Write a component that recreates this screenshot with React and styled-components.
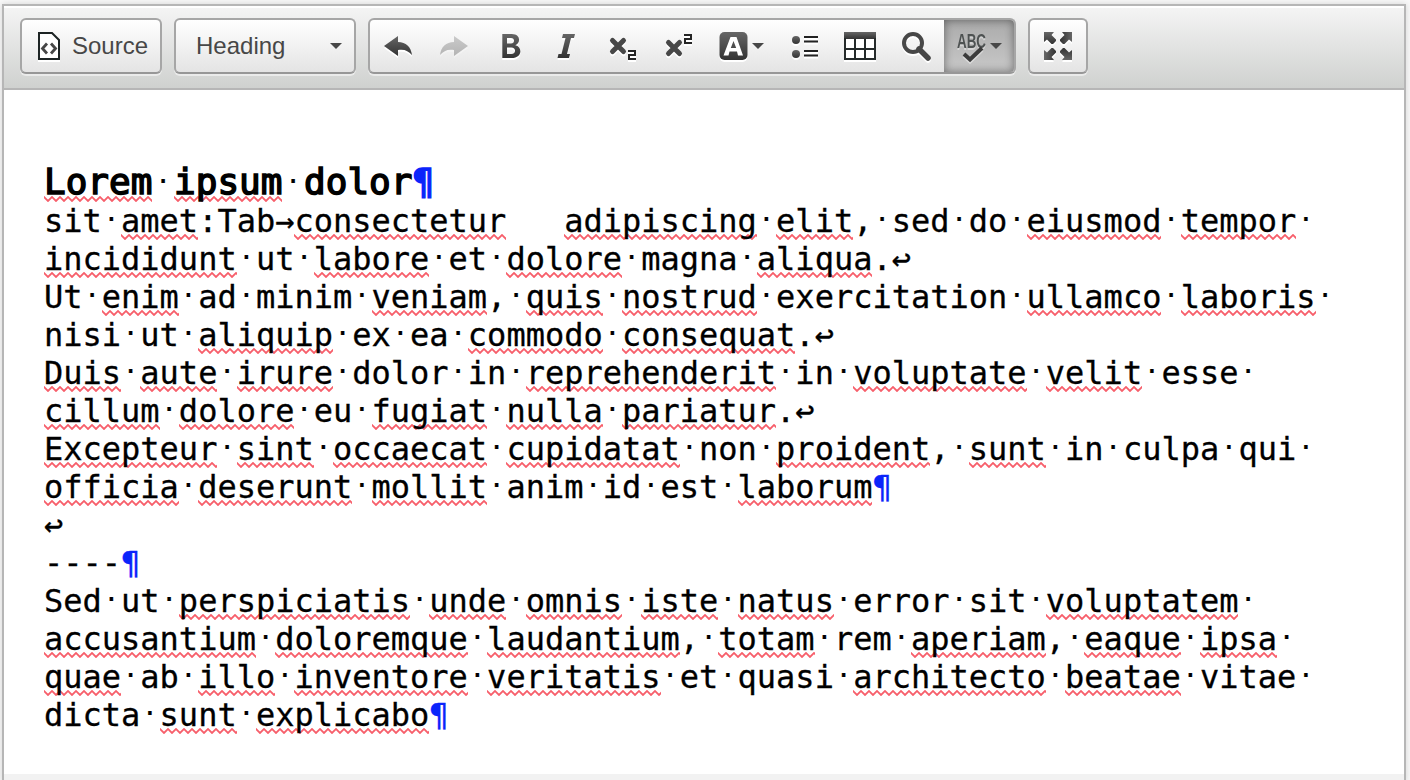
import React from 'react';
import styled, { createGlobalStyle, css } from 'styled-components';

const squiggle = `url("data:image/svg+xml,${encodeURIComponent(
  '<svg xmlns="http://www.w3.org/2000/svg" width="8" height="6" viewBox="0 0 8 6"><path d="M-2 3L0 1L4 5L8 1L10 3" fill="none" stroke="#f75f6b" stroke-width="1.8"/></svg>'
)}")`;

const Global = createGlobalStyle`
  * { box-sizing: border-box; }
  html, body { margin: 0; height: 100%; background: #f8f8f8; overflow: hidden; }
`;
const Editor = styled.div`
  width: 1404px;
  height: 778px;
  margin: 4px 0 0 2px;
  border: 2px solid #b6b6b6;
  border-bottom: 0;
  background: #fff;
  box-shadow: 0 0 6px rgba(0, 0, 0, 0.15);
  display: flex;
  flex-direction: column;
`;
const Toolbar = styled.div`
  height: 84px;
  flex: none;
  display: flex;
  align-items: flex-start;
  gap: 12px;
  padding: 12px 16px;
  border-bottom: 2px solid #b6b6b6;
  box-shadow: inset 0 2px 0 #fff;
  background: linear-gradient(#f5f5f5, #cfd1cf);
  font: 24px/1 'Liberation Sans', Arial, sans-serif;
  color: #474747;
`;
const Group = styled.div`
  height: 56px;
  width: ${(p) => p.$width}px;
  display: flex;
  border: 2px solid #a6a6a6;
  border-bottom-color: #979797;
  border-radius: 6px;
  overflow: hidden;
  box-shadow: 0 2px 0 rgba(255, 255, 255, 0.5);
  background: linear-gradient(#fff, #e4e4e4);
`;
const Button = styled.button`
  width: ${(p) => p.$width}px;
  flex: none;
  padding: 0;
  border: 0;
  font: inherit;
  color: inherit;
  display: flex;
  align-items: center;
  justify-content: center;
  gap: ${(p) => p.$gap || 0}px;
  background: transparent;
  ${(p) => p.$active && css`
    background: linear-gradient(#aaa, #c9c9c9);
    box-shadow: inset 0 0 10px rgba(0, 0, 0, 0.45);
  `}
`;
const SourceButton = styled(Button)`
  justify-content: flex-start;
  padding-left: 12px;
`;
const Combo = styled(Button)`
  justify-content: space-between;
  padding: 0 12px 0 20px;
`;
const Icon = styled.svg`
  width: 32px;
  height: 32px;
  flex: none;
  overflow: visible;
  opacity: ${(p) => (p.$disabled ? 0.3 : 1)};
  filter: drop-shadow(0 2px 0 ${(p) => (p.$dim ? 'rgba(255,255,255,.4)' : '#fff')});
`;
const IconText = styled.text`
  font: bold 20px 'Liberation Sans Narrow', 'Liberation Sans', sans-serif;
`;
const Arrow = styled.svg`
  width: 12px;
  height: 6px;
  flex: none;
  fill: #474747;
`;
const Content = styled.main`
  flex: 1;
  padding: 73px 40px 0;
  color: #000;
  font: 32px/38px 'DejaVu Sans Mono', monospace;
  -webkit-text-stroke: 0.3px;
`;
const Line = styled.div`
  white-space: pre;
  height: 38px;
`;
const Title = styled.h1`
  margin: 0 0 1px;
  height: 38px;
  white-space: pre;
  font: normal 36px/38px 'DejaVu Sans Mono', monospace;
  -webkit-text-stroke: 1.5px;
`;
const Misspelled = styled.span`
  background: ${squiggle} left bottom / 8px 6px repeat-x;
`;
const Mark = styled.span`
  color: #0b24fb;
`;
const Space = styled.span`
  display: inline-block;
  width: ${(p) => (p.$large ? 21.67 : 19.266)}px;
  text-align: center;
  vertical-align: 4px;
  font: 27px/0 'DejaVu Sans Mono', monospace;
  -webkit-text-stroke: 0.2px;
`;
const Footer = styled.footer`
  height: 8px;
  flex: none;
  background: #f2f2f2;
`;

const Caret = () => <Arrow viewBox="0 0 12 6"><path d="M0 0h12L6 6z" /></Arrow>;

const paint = 'url(#ink)';
const Undo = () => (
  <Icon viewBox="0 0 32 32">
    <path fill={paint} d="M2 16L16 6v6c8 0 13 5 14 13c-4-4-7-6-14-5v6z" />
  </Icon>
);
const Redo = () => (
  <Icon viewBox="0 0 32 32" $disabled>
    <path fill={paint} d="M30 16L16 6v6C8 12 3 17 2 25c4-4 7-6 14-5v6z" />
  </Icon>
);

/* Words wrapped in underscores carry the spelling underline. */
const rich = (text, large) =>
  text.split(/(_[^_]+_|¶|·)/).map((part, i) => {
    if (part === '¶') return <Mark key={i}>¶</Mark>;
    if (part === '·') return <Space key={i} $large={large}>·</Space>;
    if (part.startsWith('_')) return <Misspelled key={i}>{part.slice(1, -1)}</Misspelled>;
    return part;
  });

const lines = [
  'sit·_amet_:Tab→_consectetur_   _adipiscing_·_elit_,·sed·do·_eiusmod_·_tempor_·',
  '_incididunt_·ut·_labore_·et·_dolore_·magna·_aliqua_.↩',
  'Ut·_enim_·ad·minim·_veniam_,·_quis_·_nostrud_·exercitation·_ullamco_·_laboris_·',
  'nisi·ut·_aliquip_·ex·ea·_commodo_·_consequat_.↩',
  '_Duis_·_aute_·_irure_·dolor·in·_reprehenderit_·in·_voluptate_·_velit_·esse·',
  '_cillum_·_dolore_·eu·_fugiat_·_nulla_·_pariatur_.↩',
  '_Excepteur_·_sint_·_occaecat_·_cupidatat_·non·_proident_,·_sunt_·in·culpa·qui·',
  '_officia_·_deserunt_·_mollit_·anim·id·est·_laborum_¶',
  '↩',
  '----¶',
  'Sed·ut·_perspiciatis_·_unde_·_omnis_·_iste_·_natus_·error·sit·_voluptatem_·',
  '_accusantium_·_doloremque_·_laudantium_,·_totam_·rem·_aperiam_,·_eaque_·_ipsa_·',
  '_quae_·ab·_illo_·_inventore_·_veritatis_·et·quasi·_architecto_·_beatae_·vitae·',
  'dicta·_sunt_·_explicabo_¶',
];

export default function App() {
  return (
    <>
      <Global />
      <Editor>
        <Toolbar>
          <Group $width={142}>
            <SourceButton $width={138} $gap={6}>
              <Icon viewBox="0 0 32 32">
                <path d="M5 3h13l7 7v19H5z" fill="#fff" stroke="#1d2424" strokeWidth="2" />
                <path d="M13 13.5l-4.5 5 4.5 5M17 13.5l4.5 5-4.5 5" fill="none" stroke="#474747" strokeWidth="2.8" />
              </Icon>
              Source
            </SourceButton>
          </Group>
          <Group $width={182}>
            <Combo $width={178}>Heading<Caret /></Combo>
          </Group>
          <Group $width={648}>
            <Button $width={56}><Undo /></Button>
            <Button $width={56}><Redo /></Button>
            <Button $width={56}>
              <Icon viewBox="0 0 32 32"><path fill={paint} fillRule="evenodd" d="M8.3 4h9.5c9 0 9 9 3.5 11.3c7.500 1.500 7 12.700-3.800 12.700H8.300zM13 8v5.500h4c4 0 4-5.500 0-5.500zM13 17.500v6.500h4.300c5 0 5-6.500 0-6.500z" /></Icon>
            </Button>
            <Button $width={56}>
              <Icon viewBox="0 0 32 32"><path fill={paint} d="M13 4h12l-1 4h-3l-4 16h3l-1 4H7.500l1-4h3l4-16h-3.500z" /></Icon>
            </Button>
            <Button $width={56}>
              <Icon viewBox="0 0 32 32">
                <path d="M6.500 10.500l11 11M17.500 10.500l-11 11" stroke="#474747" strokeWidth="5" strokeLinecap="round" />
                <path d="M22 21h7v4h-6v4h7" fill="none" stroke="#252525" strokeWidth="2" />
              </Icon>
            </Button>
            <Button $width={56}>
              <Icon viewBox="0 0 32 32">
                <path d="M6.500 12.500l11 11M17.500 12.500l-11 11" stroke="#474747" strokeWidth="5" strokeLinecap="round" />
                <path d="M22 5h7v4h-6v4h7" fill="none" stroke="#252525" strokeWidth="2" />
              </Icon>
            </Button>
            <Button $width={70} $gap={2}>
              <Icon viewBox="0 0 32 32">
                <rect x="1.5" y="2" width="28" height="28" rx="5" fill={paint} />
                <path fillRule="evenodd" fill="#fff" d="M12.500 7h6l6.500 18.500h-5l-1-4h-7.500l-1 4H5.500zM15.500 11l-2.700 7h5.400z" />
              </Icon>
              <Caret />
            </Button>
            <Button $width={56}>
              <Icon viewBox="0 0 32 32">
                <circle cx="8" cy="10" r="4" fill={paint} /><circle cx="8" cy="24" r="4" fill={paint} />
                <path d="M16 7h14M16 11.500h14M16 21h14M16 25.500h14" stroke="#222" strokeWidth="2" />
              </Icon>
            </Button>
            <Button $width={56}>
              <Icon viewBox="0 0 32 32">
                <path fill="#fff" d="M1 3h30v26H1z" /><path fill={paint} d="M0 2h32v7H0z" />
                <path d="M1 8v21h30V8M11 9v20M21 9v20M1 19h30" fill="none" stroke="#252a2a" strokeWidth="2" />
              </Icon>
            </Button>
            <Button $width={56}>
              <Icon viewBox="0 0 32 32">
                <path d="M19 19l9 9" stroke="#474747" strokeWidth="5.5" strokeLinecap="round" />
                <circle cx="13" cy="13" r="9" fill="none" stroke="#474747" strokeWidth="4" />
              </Icon>
            </Button>
            <Button $width={70} $gap={2} $active>
              <Icon viewBox="0 0 32 32" $dim>
                <IconText x="1" y="18" textLength="29" lengthAdjust="spacingAndGlyphs" fill="#4e5252">ABC</IconText>
                <path d="M8 24l6 5.500L26 18" fill="none" stroke="#3c3c3c" strokeWidth="4" />
              </Icon>
              <Caret />
            </Button>
          </Group>
          <Group $width={60}>
            <Button $width={56}>
              <Icon viewBox="0 0 32 32">
                <g fill={paint}>
                  {[0, 90, 180, 270].map((angle) => (
                    <path key={angle} transform={`rotate(${angle} 16 16)`} d="M2 2H12L9.500 5L14 9.500V11L11 14H9.500L5 9.500L2 12Z" />
                  ))}
                </g>
              </Icon>
            </Button>
          </Group>
        </Toolbar>
        <Content>
          <Title>{rich('_Lorem_·_ipsum_·dolor¶', true)}</Title>
          {lines.map((line) => <Line key={line}>{rich(line)}</Line>)}
        </Content>
        <Footer />
      </Editor>
      <svg width="0" height="0">
        <linearGradient id="ink" x2="0" y2="1">
          <stop stopColor="#666" /><stop offset="1" stopColor="#333" />
        </linearGradient>
      </svg>
    </>
  );
}
